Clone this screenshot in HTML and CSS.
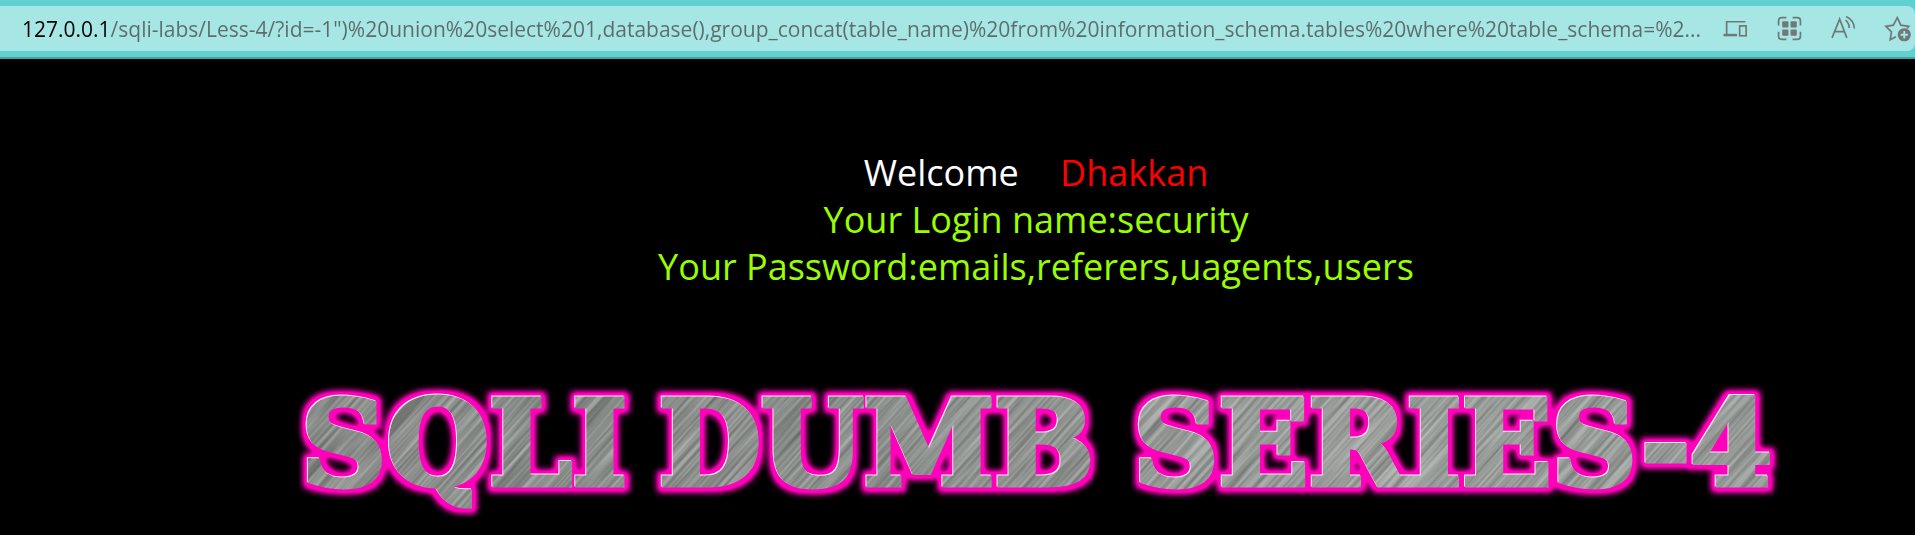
FILE: index.html
```html
<!DOCTYPE html>
<html lang="en">
<head>
<meta charset="utf-8">
<title>Less-4</title>
<link rel="stylesheet" href="styles.css">
</head>
<body>
<header class="toolbar">
  <form class="address">
    <input class="url" type="text" aria-label="Address" spellcheck="false" value="127.0.0.1/sqli-labs/Less-4/?id=-1&quot;)%20union%20select%201,database(),group_concat(table_name)%20from%20information_schema.tables%20where%20table_schema=%2...">
    <div class="actions">
      <button class="action" type="button" aria-label="Send to devices">
        <svg class="icon" viewBox="0 0 24 24"><path d="M3.500 18V5.500H21.500" /><path d="M0.500 18.300H13.500" stroke-width="2.400"/><rect x="16" y="9.500" width="6.200" height="9.500"/></svg>
      </button>
      <button class="action" type="button" aria-label="Split apps">
        <svg class="icon" viewBox="0 0 24 24"><path d="M1.500 9V4.500Q1.500 1.500 4.500 1.500H9M15 1.500H19.500Q22.500 1.500 22.500 4.500V9M22.500 15V19.500Q22.500 22.500 19.500 22.500H15M9 22.500H4.500Q1.500 22.500 1.500 19.500V15"/><g class="solid"><rect x="5" y="5" width="6" height="6" rx="1"/><rect x="13" y="5" width="6" height="6" rx="1"/><rect x="5" y="13" width="6" height="6" rx="1"/><rect x="13" y="13" width="6" height="6" rx="1"/></g></svg>
      </button>
      <button class="action" type="button" aria-label="Read aloud">
        <svg class="icon" viewBox="0 0 24 24"><path d="M1 21L8.300 3L15.200 21M3.600 15H12.800"/><path d="M14 4Q17.500 7 17.500 11.500M14.500 0.500Q22 4 22.500 12"/></svg>
      </button>
      <button class="action" type="button" aria-label="Add to favourites">
        <svg class="icon" viewBox="0 0 24 24"><path d="M10.500 20L5 22.800L6.200 15.200L0.800 10L8 8.800L11.800 1.500L15.200 8.800L22.800 10L21 12"/><circle class="solid" cx="18.500" cy="18" r="6.300"/><path class="plus" d="M18.500 14.500V21.500M15 18H22"/></svg>
      </button>
    </div>
  </form>
</header>
<main class="page">
  <section class="messages">
    <p class="welcome">Welcome <span class="user">Dhakkan</span></p>
    <p>Your Login name:security</p>
    <p>Your Password:emails,referers,uagents,users</p>
  </section>
  <svg class="banner" viewBox="0 0 1520 165">
    <defs>
      <linearGradient id="sheen" x1="0" y1="0" x2="1" y2="0">
        <stop offset="0" stop-color="#858986"/><stop offset="0.400" stop-color="#8b8f8c"/><stop offset="0.700" stop-color="#9da19e"/><stop offset="1" stop-color="#979b98"/>
      </linearGradient>
      <filter id="grain" x="0" y="0" width="100%" height="100%" color-interpolation-filters="sRGB">
        <feTurbulence type="fractalNoise" baseFrequency="0.300 0.008" numOctaves="3" seed="4"/>
        <feColorMatrix values="1.300 0 0 0 -0.080  1.300 0 0 0 -0.070  1.300 0 0 0 -0.080  0 0 0 0 1"/>
      </filter>
      <pattern id="steel" width="1520" height="165" patternUnits="userSpaceOnUse">
        <rect width="1520" height="165" fill="url(#sheen)"/>
        <g transform="rotate(42)" opacity="0.300"><rect x="-50" y="-1100" width="1300" height="1400" filter="url(#grain)"/></g>
      </pattern>
      <filter id="glow" x="0" y="0" width="1520" height="165" filterUnits="userSpaceOnUse" color-interpolation-filters="sRGB">
        <feMorphology in="SourceAlpha" operator="dilate" radius="4" result="wide"/>
        <feGaussianBlur in="wide" stdDeviation="3" result="soft"/>
        <feComponentTransfer in="soft" result="halo"><feFuncA type="linear" slope="1.600"/></feComponentTransfer>
        <feFlood flood-color="#ff00bb"/>
        <feComposite in2="halo" operator="in" result="pink"/>
        <feOffset in="SourceAlpha" dx="-1" dy="-1" result="up"/>
        <feFlood flood-color="#ffe6fa"/>
        <feComposite in2="up" operator="in" result="edge"/>
        <feMerge><feMergeNode in="pink"/><feMergeNode in="edge"/><feMergeNode in="SourceGraphic"/></feMerge>
      </filter>
    </defs>
    <text class="title" y="115"><tspan x="209">SQLI</tspan> <tspan x="621">DUMB</tspan> <tspan x="1177">SERIES-4</tspan></text>
  </svg>
</main>
</body>
</html>
```
FILE: styles.css
```css
* { box-sizing: border-box; }
body { margin: 0; min-height: 100vh; background: #000; font-family: "Open Sans", "Noto Sans", sans-serif; }
.toolbar { padding: 6px 0; background: #60d0d0; border-bottom: 2px solid #48a0a0; }
.address { display: flex; align-items: center; height: 45px; padding: 0 5px 0 22px; background: #a6e6e4; border-radius: 0 8px 8px 0; }
.url {
  flex: 1; min-width: 0; height: 45px; padding: 0; border: 0; outline: 0;
  font: 21px "Open Sans", "Noto Sans", sans-serif; color: transparent;
  background: linear-gradient(90deg, #000 88px, #5c6c6c 88px);
  -webkit-background-clip: text; background-clip: text;
}
.actions { display: flex; gap: 29px; padding-left: 16px; }
.action { width: 25px; height: 25px; padding: 0; border: 0; background: none; color: #707878; }
.icon { display: block; width: 25px; height: 25px; fill: none; stroke: currentColor; stroke-width: 1.6; overflow: visible; }
.solid { fill: currentColor; stroke: none; }
.plus { stroke: #a6e6e4; stroke-width: 1.8; }
.page { padding: 90px 0 0 157px; }
.messages { color: #99ff00; font-size: 36px; line-height: 47px; text-align: center; }
.messages p { margin: 0; }
.welcome { color: #fff; }
.user { margin-left: 32px; color: #f00; }
.banner { display: block; width: 1520px; max-width: 100%; margin: 80px auto 0; }
.title { font: bold 118px "DejaVu Serif", serif; text-anchor: middle; fill: url(#steel); stroke: url(#steel); stroke-width: 5px; filter: url(#glow); }
```
